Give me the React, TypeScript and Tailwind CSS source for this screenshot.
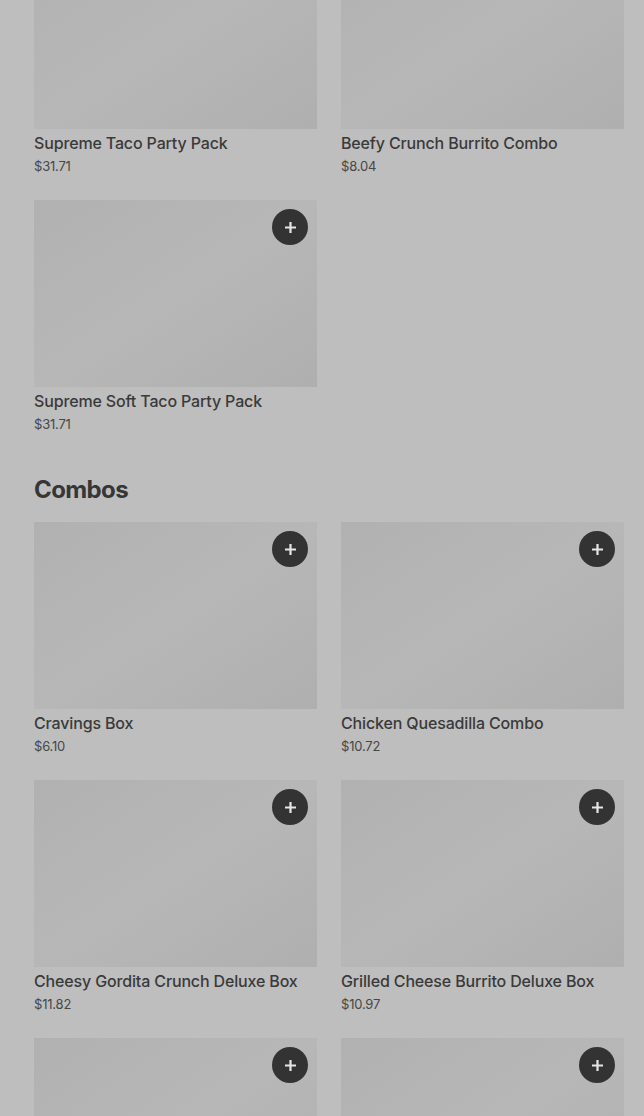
import React from 'react';

type Item = { name: string; price: string; add?: boolean };

const partyPacks: Item[] = [
  { name: 'Supreme Taco Party Pack', price: '$31.71' },
  { name: 'Beefy Crunch Burrito Combo', price: '$8.04' },
  { name: 'Supreme Soft Taco Party Pack', price: '$31.71', add: true },
];

const combos: Item[] = [
  { name: 'Cravings Box', price: '$6.10', add: true },
  { name: 'Chicken Quesadilla Combo', price: '$10.72', add: true },
  { name: 'Cheesy Gordita Crunch Deluxe Box', price: '$11.82', add: true },
  { name: 'Grilled Cheese Burrito Deluxe Box', price: '$10.97', add: true },
  { name: 'Nachos BellGrande Combo', price: '$9.49', add: true },
  { name: 'Crunchwrap Supreme Combo', price: '$10.29', add: true },
];

const PlusButton = () => (
  <button className="absolute top-[9px] right-[9px] w-9 h-9 rounded-full bg-[#333333] flex items-center justify-center">
    <svg width="13" height="13" viewBox="0 0 13 13" fill="none">
      <path d="M6.5 1v11M1 6.5h11" stroke="#e6e6e6" strokeWidth="2.2" />
    </svg>
  </button>
);

const Card = ({ item }: { item: Item }) => (
  <div className="flex flex-col">
    <div className="relative h-[187px] bg-gradient-to-br from-[#b1b1b1] via-[#b7b7b7] to-[#afafaf]">
      {item.add && <PlusButton />}
    </div>
    <div className="mt-[3px] text-[16px] leading-[22px] font-medium tracking-[-0.15px] text-[#3a3a3a] truncate">{item.name}</div>
    <div className="mt-[3px] text-[13px] leading-[18px] tracking-[-0.2px] text-[#474747]">{item.price}</div>
  </div>
);

export default function App() {
  return (
    <div
      className="h-screen bg-[#bebebe] pl-[34px] pr-[20px] overflow-hidden"
      style={{ fontFamily: 'Inter, "Noto Sans", sans-serif' }}
    >
      <div className="grid grid-cols-2 gap-x-6 gap-y-[25px] mt-[-58px]">
        {partyPacks.map((it) => (
          <Card key={it.name} item={it} />
        ))}
      </div>

      <h2 className="mt-[41px] mb-4 text-[24px] leading-[32px] font-bold tracking-tight text-[#363636]">Combos</h2>

      <div className="grid grid-cols-2 gap-x-6 gap-y-[25px]">
        {combos.map((it) => (
          <Card key={it.name} item={it} />
        ))}
      </div>
    </div>
  );
}
